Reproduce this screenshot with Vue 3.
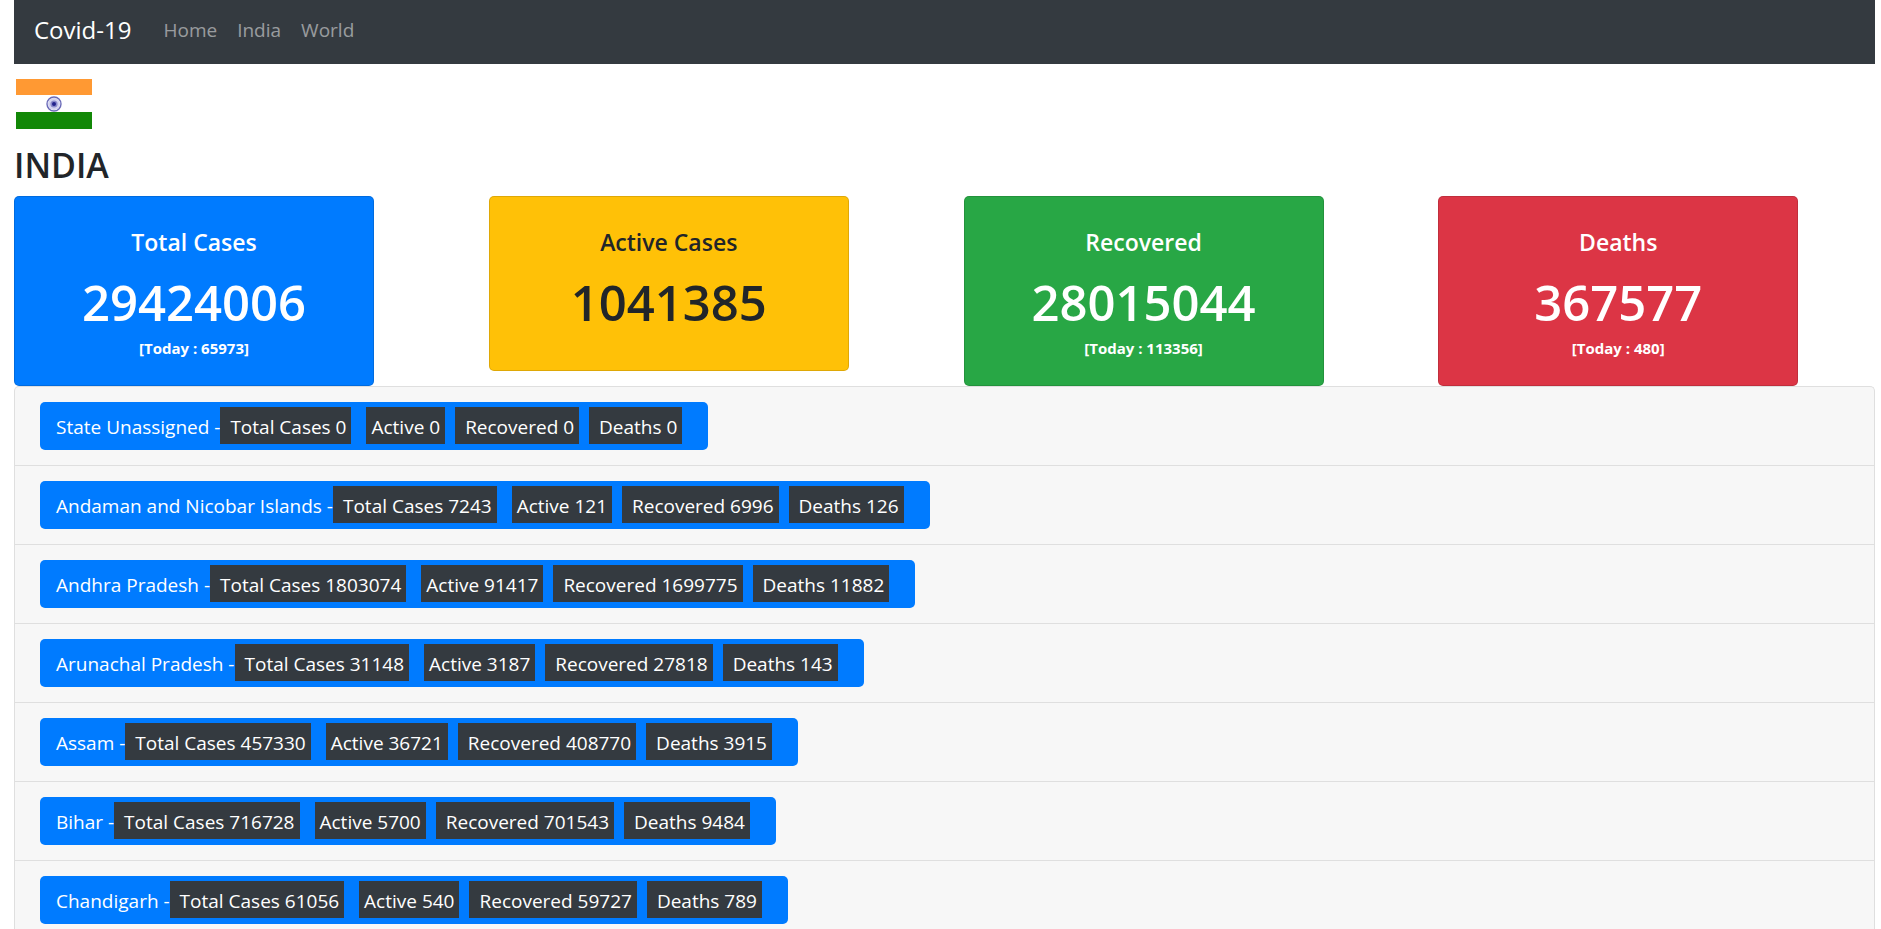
<script setup>
const links = ['Home', 'India', 'World']

const totals = [
  { title: 'Total Cases', value: 29424006, today: 65973, tone: 'primary' },
  { title: 'Active Cases', value: 1041385, today: null, tone: 'warning' },
  { title: 'Recovered', value: 28015044, today: 113356, tone: 'success' },
  { title: 'Deaths', value: 367577, today: 480, tone: 'danger' },
]

const states = [
  { name: 'State Unassigned', total: 0, active: 0, recovered: 0, deaths: 0 },
  { name: 'Andaman and Nicobar Islands', total: 7243, active: 121, recovered: 6996, deaths: 126 },
  { name: 'Andhra Pradesh', total: 1803074, active: 91417, recovered: 1699775, deaths: 11882 },
  { name: 'Arunachal Pradesh', total: 31148, active: 3187, recovered: 27818, deaths: 143 },
  { name: 'Assam', total: 457330, active: 36721, recovered: 408770, deaths: 3915 },
  { name: 'Bihar', total: 716728, active: 5700, recovered: 701543, deaths: 9484 },
  { name: 'Chandigarh', total: 61056, active: 540, recovered: 59727, deaths: 789 },
]
</script>

<template>
  <div class="page">
    <nav class="navbar">
      <a class="brand" href="#">Covid-19</a>
      <a v-for="link in links" :key="link" class="nav-link" href="#">{{ link }}</a>
    </nav>

    <main>
      <svg class="flag" viewBox="0 0 80 80" role="img" aria-label="Flag of India">
        <rect x="2" y="15" width="76" height="50" fill="#fff" />
        <rect x="2" y="15" width="76" height="16" fill="#ff9933" />
        <rect x="2" y="48" width="76" height="17" fill="#128807" />
        <circle cx="40" cy="40" r="6" fill="#d3d3f0" />
        <circle cx="40" cy="40" r="7" fill="none" stroke="#6a6ab8" stroke-width="1.4" />
        <circle cx="40" cy="40" r="3.6" fill="#8a8acb" />
        <circle cx="40" cy="40" r="2" fill="#22228c" />
      </svg>
      <h1 class="country">INDIA</h1>

      <section class="totals">
        <article v-for="card in totals" :key="card.title" class="card" :class="card.tone">
          <h2 class="card-title">{{ card.title }}</h2>
          <p class="card-value">{{ card.value }}</p>
          <p v-if="card.today !== null" class="card-today">[Today : {{ card.today }}]</p>
        </article>
      </section>

      <section class="states">
        <div v-for="state in states" :key="state.name" class="state">
          <button type="button" class="state-button">
            <span class="name">{{ state.name }} -</span>
            <span class="badge total">Total Cases {{ state.total }}</span>
            <span class="badge active">Active {{ state.active }}</span>
            <span class="badge">Recovered {{ state.recovered }}</span>
            <span class="badge">Deaths {{ state.deaths }}</span>
          </button>
        </div>
      </section>
    </main>
  </div>
</template>

<style>
body {
  margin: 0;
  background: #fff;
}
</style>

<style scoped>
.page {
  box-sizing: border-box;
  height: 100vh;
  overflow: hidden;
  padding: 0 6px 0 14px;
  font-family: "Segoe UI", "Open Sans", "Noto Sans", sans-serif;
  font-size: 19px;
  line-height: 30px;
  color: #212529;
}

.navbar {
  display: flex;
  align-items: center;
  box-sizing: border-box;
  height: 64px;
  padding: 0 20px 4px;
  background: #343a40;
}

.brand {
  margin-right: 22px;
  font-size: 24px;
  color: #fff;
  text-decoration: none;
}

.nav-link {
  padding: 0 10px;
  color: rgba(255, 255, 255, 0.5);
  text-decoration: none;
}

.flag {
  display: block;
  width: 80px;
  height: 80px;
}

.country {
  margin: 0 0 10px;
  font-size: 34px;
  font-weight: 600;
  line-height: 42px;
}

.totals {
  display: grid;
  grid-template-columns: repeat(4, 1fr);
  gap: 38px;
  align-items: start;
}

.card {
  box-sizing: border-box;
  width: 100%;
  max-width: 360px;
  min-height: 175px;
  padding: 30px 25px 27px;
  border: 1px solid rgba(0, 0, 0, 0.125);
  border-radius: 5px;
  text-align: center;
  color: #fff;
}

.primary {
  background: #007bff;
}

.warning {
  background: #ffc107;
  color: #212529;
}

.success {
  background: #28a745;
}

.danger {
  background: #dc3545;
}

.card-title {
  margin: 0 0 15px;
  font-size: 23px;
  font-weight: 600;
  line-height: 30px;
}

.card-value {
  margin: 0;
  font-size: 49px;
  font-weight: 600;
  line-height: 60px;
}

.card-today {
  margin: 6px 0 0;
  font-size: 15px;
  font-weight: 700;
  line-height: 20px;
}

.states {
  border: 1px solid #dfdfdf;
  border-bottom: 0;
  border-radius: 5px 5px 0 0;
  background: #f7f7f7;
}

.state {
  padding: 15px 25px;
  border-bottom: 1px solid #dfdfdf;
}

.state-button {
  display: flex;
  align-items: flex-start;
  height: 48px;
  padding: 5px 26px 0 16px;
  border: 0;
  border-radius: 5px;
  background: #007bff;
  color: #fff;
  font: inherit;
  white-space: nowrap;
}

.name,
.badge {
  padding-top: 3px;
  line-height: 34px;
}

.badge {
  margin-left: 10px;
  padding-right: 5px;
  padding-left: 10px;
  background: #343a40;
}

.badge.total {
  margin-left: 0;
}

.badge.active {
  margin-left: 15px;
  padding-left: 5px;
}
</style>
